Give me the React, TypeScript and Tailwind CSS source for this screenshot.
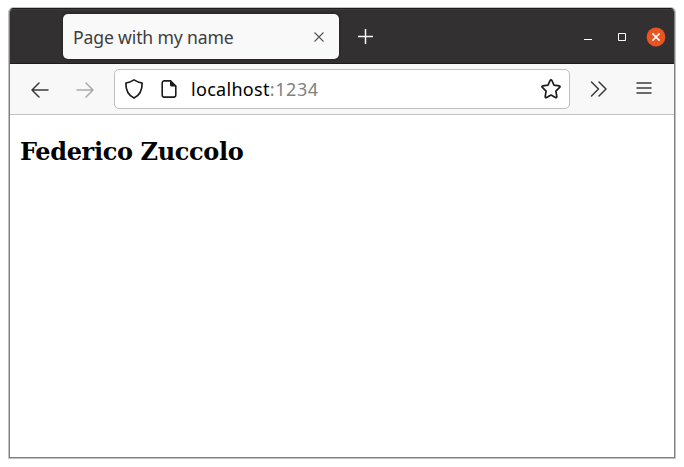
import React from "react";

function TabBar() {
  return (
    <header className="flex h-[55px] items-start border-b border-t border-[#1d1b1c] border-t-[#3d3b3c] bg-[#333031] pl-[53px] pt-[4px]">
      <div className="flex h-[45px] w-[276px] items-center justify-between rounded-[5px] bg-[#f9f9f9] pl-[10px] pr-[14px] shadow-[0_0_3px_rgba(0,0,0,0.5)]">
        <span className="whitespace-nowrap font-['Noto_Sans',sans-serif] text-[17.6px] leading-6 tracking-[-0.15px] text-[#3e3e3e]">
          Page with my name
        </span>
        <svg width="12" height="12" viewBox="0 0 12 12" className="shrink-0" fill="none" stroke="#555" strokeWidth="1.1">
          <path d="M1.5 1.5l9 9M10.5 1.5l-9 9" />
        </svg>
      </div>
      <svg width="16" height="16" viewBox="0 0 16 16" className="ml-[18px] mt-[14px]" fill="none" stroke="#f5f5f5" strokeWidth="1.5">
        <path d="M8.5 1v15M1 8.5h15" />
      </svg>
      <div className="ml-auto mr-[8px] mt-[13px] flex h-5 items-center">
        <svg width="8" height="8" viewBox="0 0 8 8" className="mr-[26px]">
          <path d="M0 6h8v1H0z" fill="#fff" />
        </svg>
        <svg width="8" height="8" viewBox="0 0 8 8" className="mr-[20px]">
          <path d="M.5.5h7v7h-7z" fill="none" stroke="#fff" />
        </svg>
        <svg width="20" height="20" viewBox="0 0 20 20">
          <circle cx="10" cy="10" r="9.4" fill="#e95420" />
          <path d="M6.4 6.4l7.2 7.2M13.6 6.4l-7.2 7.2" stroke="#fff" strokeWidth="1.5" />
        </svg>
      </div>
    </header>
  );
}

function Toolbar() {
  return (
    <nav className="flex h-[51px] items-center border-b border-[#c3c3c3] bg-[#f8f8f8]">
      <svg width="20" height="18" viewBox="0 0 20 18" className="ml-[20px] mt-[1px]" fill="none" stroke="#3b3b3b" strokeWidth="1.5" strokeLinecap="round" strokeLinejoin="round">
        <path d="M18 9H2M9 2L2 9l7 7" />
      </svg>
      <svg width="20" height="18" viewBox="0 0 20 18" className="ml-[25px] mt-[1px]" fill="none" stroke="#aaa" strokeWidth="1.5" strokeLinecap="round" strokeLinejoin="round">
        <path d="M2 9h16M11 2l7 7-7 7" />
      </svg>
      <div className="ml-[19px] flex h-[40px] w-[456px] shrink-0 items-center rounded-[5px] border border-[#bfbfbf] bg-white pl-[9px] pr-[7px]">
        <svg width="20" height="22" viewBox="0 0 20 22" fill="none" stroke="#1c1c1c" strokeWidth="1.7" strokeLinejoin="round">
          <path d="M10 1.9Q14 4.4 18.1 5C18.3 12 15.8 17.2 10 20.1 4.2 17.2 1.7 12 1.9 5Q6 4.4 10 1.9Z" />
        </svg>
        <svg width="18" height="20" viewBox="0 0 18 20" className="ml-[16px]">
          <path d="M10.5 1.9H4.2a2 2 0 0 0-2 2v12.2a2 2 0 0 0 2 2h9.6a2 2 0 0 0 2-2V7.2z" fill="none" stroke="#1c1c1c" strokeWidth="1.6" />
          <path d="M10 1.2L16.5 7.6H11.5a1.5 1.5 0 0 1-1.5-1.5z" fill="#1c1c1c" />
        </svg>
        <span className="ml-[13px] whitespace-nowrap font-['Noto_Sans',sans-serif] text-[18px] leading-6 tracking-[0.3px] text-black">
          localhost<span className="tracking-[0.6px] text-[#818181]">:1234</span>
        </span>
        <svg width="22" height="22" viewBox="0 0 22 22" className="ml-auto" fill="none" stroke="#1c1c1c" strokeWidth="1.7" strokeLinejoin="round">
          <path d="M10.1 2.5Q11 1 11.9 2.5L14 7.1 19.1 7.8Q20.7 8.2 19.6 9.4L15.9 13.1 16.8 18.4Q16.8 20 15.4 19.4L11 17.1 6.6 19.4Q5.2 20 5.2 18.4L6.1 13.1 2.4 9.4Q1.3 8.2 2.9 7.8L8 7.1Z" />
        </svg>
      </div>
      <svg width="18" height="18" viewBox="0 0 18 18" className="ml-[20px]" fill="none" stroke="#3b3b3b" strokeWidth="1.5" strokeLinecap="round" strokeLinejoin="round">
        <path d="M1.5 2l7 7-7 7M9 2l7 7-7 7" />
      </svg>
      <svg width="16" height="14" viewBox="0 0 16 14" className="mb-[2px] ml-[28px]" stroke="#3b3b3b" strokeWidth="1.5" strokeLinecap="round">
        <path d="M1 2h14M1 7h14M1 12h14" />
      </svg>
    </nav>
  );
}

export default function App() {
  return (
    <div className="h-[467px] w-[684px] overflow-hidden bg-white pl-[8px] pt-[7px]">
      <div className="h-[452px] w-[668px] overflow-hidden rounded-t-[5px] border border-[#c2c2c2]">
        <div className="flex h-full flex-col overflow-hidden rounded-t-[4px] border border-[#808080] border-t-[#1d1b1c] bg-white">
          <TabBar />
          <Toolbar />
          <main className="pl-[10px] pt-[23px]">
            <h2 className="font-['DejaVu_Serif',serif] text-[24px] font-bold leading-[28px] tracking-[-0.36px] text-black">Federico Zuccolo</h2>
          </main>
        </div>
      </div>
    </div>
  );
}
